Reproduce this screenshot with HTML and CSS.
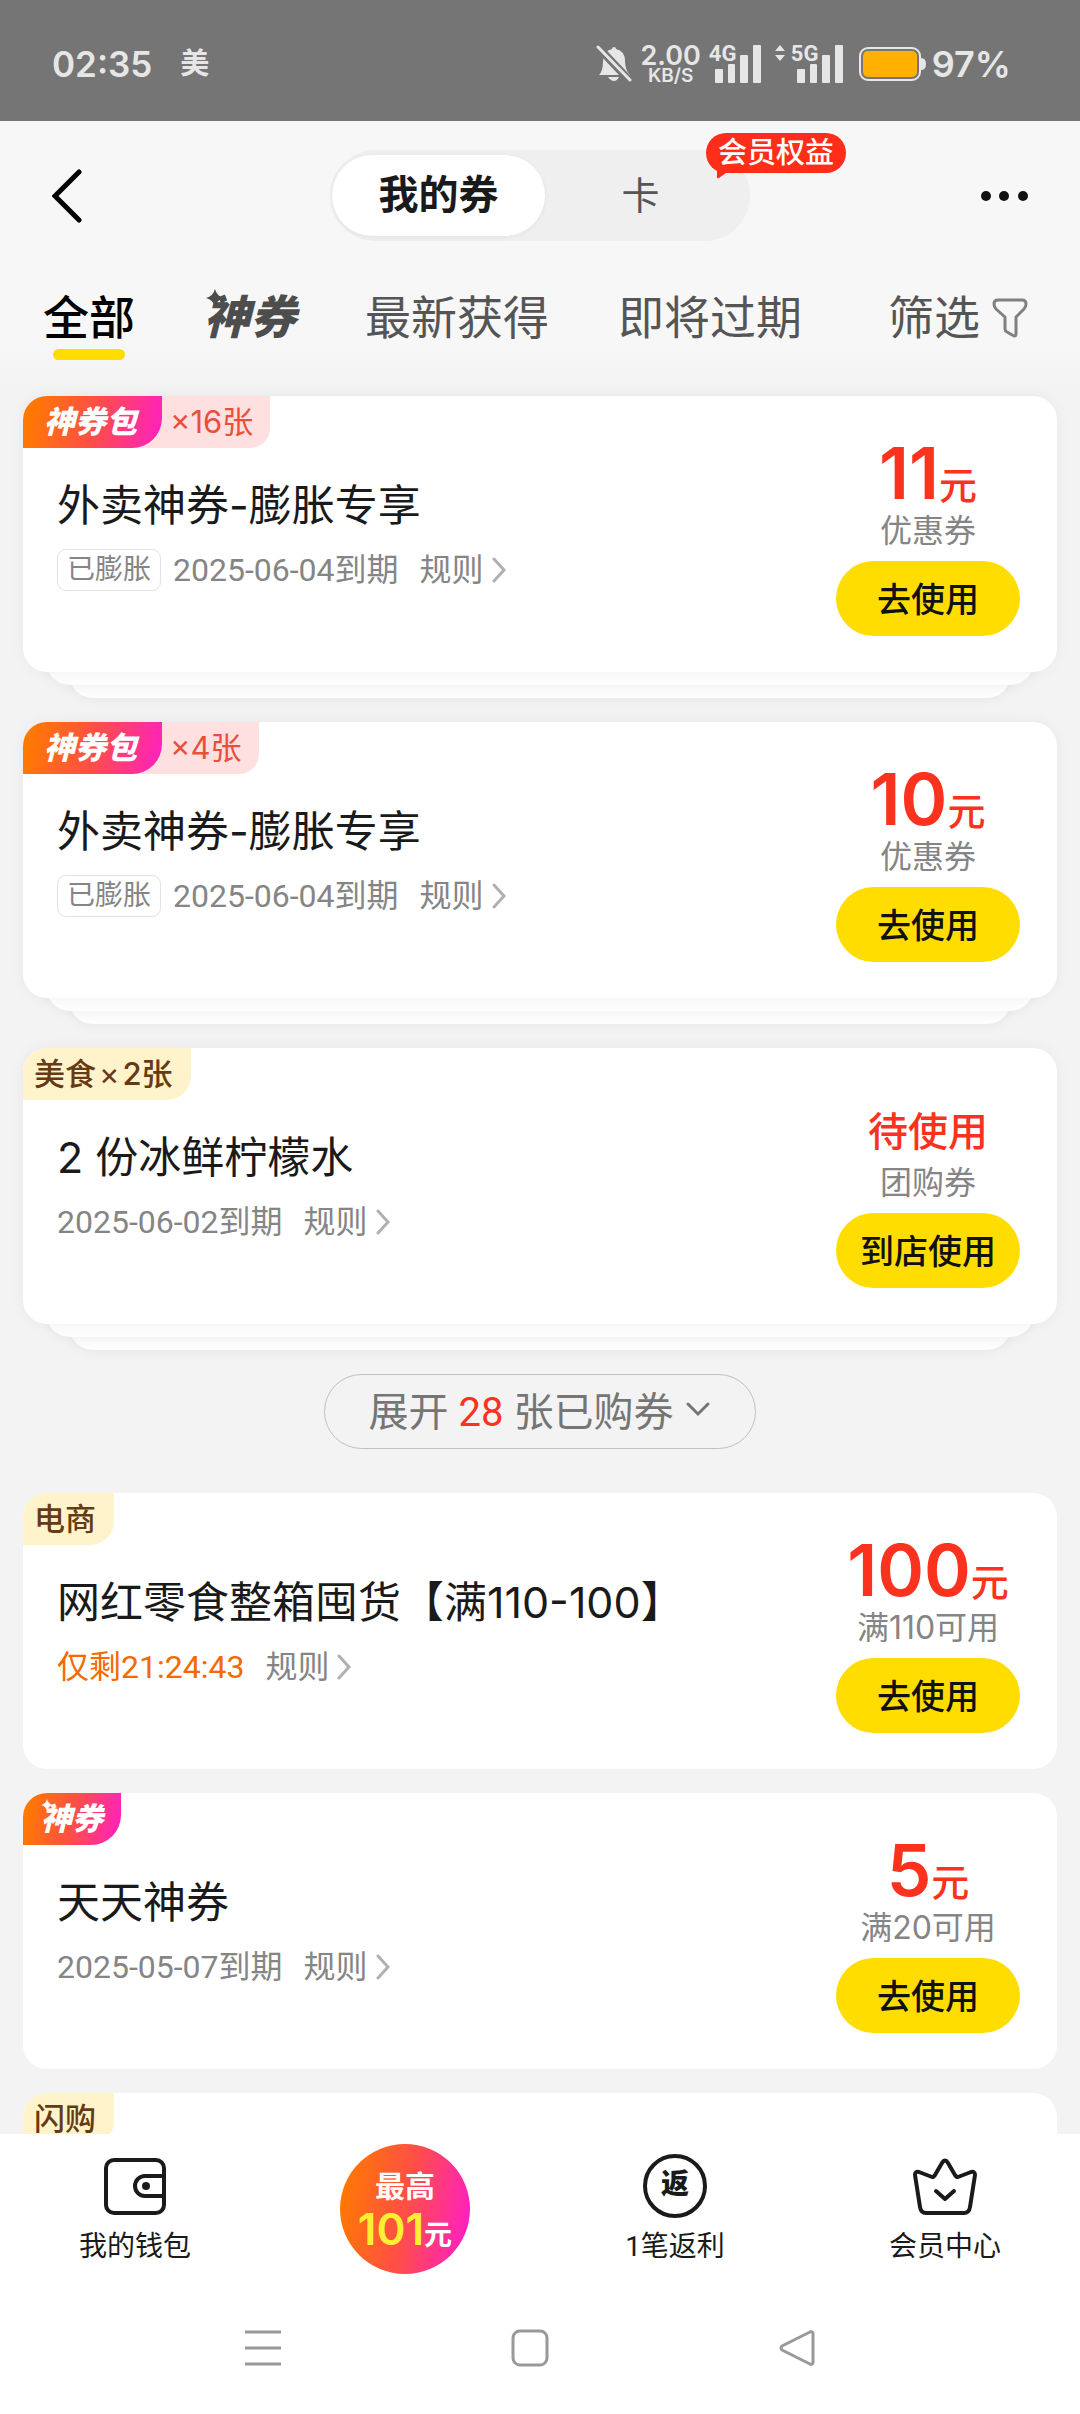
FILE: index.html
```html
<!DOCTYPE html>
<html lang="zh-CN">
<head>
<meta charset="utf-8">
<meta name="viewport" content="width=device-width">
<title>我的券</title>
<link rel="stylesheet" href="styles.css">
</head>
<body>
<svg class="defs" aria-hidden="true">
  <symbol id="chev" viewBox="0 0 14 26"><path d="M2 2l10 11L2 24" fill="none" stroke="#b0b0b0" stroke-width="3" stroke-linecap="round"/></symbol>
  <symbol id="star" viewBox="0 0 20 20"><path d="M10 0q2 8 10 10q-8 2-10 10q-2-8-10-10q8-2 10-10z" fill="currentColor"/></symbol>
</svg>

<div class="status">
  <span class="clock">02:35</span><span class="notice">美</span>
  <div class="status-right">
    <svg class="bell" width="36" height="38" viewBox="0 0 36 38">
      <path d="M18 2q2 0 2 2q9 2 9 12q0 9 5 14H3q4-4 4-14q0-10 9-12q0-2 2-2zM12 32h11q-2 4-5 4t-6-4z" fill="#e6e6e6"/>
      <path d="M0 0l36 38" stroke="#757575" stroke-width="8"/>
      <path d="M2 2l32 33" stroke="#e6e6e6" stroke-width="3" stroke-linecap="round"/>
    </svg>
    <div class="speed"><b>2.00</b><small>KB/S</small></div>
    <div class="signal"><span>4G</span>
      <svg width="46" height="38" viewBox="0 0 46 38" fill="#e6e6e6"><rect y="24" width="8" height="14" rx="1"/><rect x="13" y="19" width="7" height="19" rx="1"/><rect x="25" y="10" width="8" height="28" rx="1"/><rect x="38" width="8" height="38" rx="1"/></svg>
    </div>
    <div class="signal five">
      <svg class="arrows" width="10" height="16" viewBox="0 0 10 16" fill="#e6e6e6"><path d="M5 0l5 6H0zM5 16l5-6H0z"/></svg><span>5G</span>
      <svg width="46" height="38" viewBox="0 0 46 38" fill="#e6e6e6"><rect y="24" width="8" height="14" rx="1"/><rect x="13" y="19" width="7" height="19" rx="1"/><rect x="25" y="10" width="8" height="28" rx="1"/><rect x="38" width="8" height="38" rx="1"/></svg>
    </div>
    <svg class="battery" width="67" height="36" viewBox="0 0 67 36">
      <rect x="1" y="2" width="60" height="32" rx="8" fill="none" stroke="#e6e6e6" stroke-width="2"/>
      <rect x="4" y="5" width="54" height="26" rx="5" fill="#ffb000"/>
      <path d="M62 12q5 0 5 6t-5 6z" fill="#e6e6e6"/>
    </svg>
    <span class="percent">97%</span>
  </div>
</div>

<header class="header">
  <button class="icon-btn" aria-label="返回"><svg width="30" height="54" viewBox="0 0 30 54"><path d="M27 3L3 27l24 24" fill="none" stroke="#000" stroke-width="5" stroke-linecap="round"/></svg></button>
  <div class="switch">
    <button class="on">我的券</button><button>卡</button>
    <span class="bubble">会员权益<svg width="14" height="9" viewBox="0 0 14 9"><path d="M1 0v7q0 2 2 1L14 0z" fill="#ff2d19"/></svg></span>
  </div>
  <button class="icon-btn" aria-label="更多"><svg width="48" height="12" viewBox="0 0 48 12" fill="#111"><circle cx="6" cy="6" r="5"/><circle cx="24" cy="6" r="5"/><circle cx="43" cy="6" r="5"/></svg></button>
</header>

<nav class="tabs">
  <button class="active">全部</button>
  <button class="brand"><svg class="star"><use href="#star"/></svg>神券</button>
  <button>最新获得</button>
  <button>即将过期</button>
  <button class="filter">筛选<svg width="36" height="40" viewBox="0 0 36 40"><path d="M6 2h24q4 0 4 4q0 3-2 5l-8 8v17q0 2-2 2l-7-4q-2-1-2-3V19L4 11Q2 9 2 6q0-4 4-4z" fill="none" stroke="#808080" stroke-width="3" stroke-linejoin="round"/></svg></button>
</nav>

<main class="list">
  <div class="stack"><article class="card">
    <div class="left">
      <div class="tags"><span class="tag hot">神券包</span><span class="tag count">×16张</span></div>
      <h2>外卖神券-膨胀专享</h2>
      <p class="meta"><span class="chip">已膨胀</span><span>2025-06-04到期</span><button class="rule">规则<svg><use href="#chev"/></svg></button></p>
    </div>
    <div class="right"><p class="price">11<small>元</small></p><p class="kind">优惠券</p><button class="use">去使用</button></div>
  </article></div>

  <div class="stack"><article class="card">
    <div class="left">
      <div class="tags"><span class="tag hot">神券包</span><span class="tag count">×4张</span></div>
      <h2>外卖神券-膨胀专享</h2>
      <p class="meta"><span class="chip">已膨胀</span><span>2025-06-04到期</span><button class="rule">规则<svg><use href="#chev"/></svg></button></p>
    </div>
    <div class="right"><p class="price">10<small>元</small></p><p class="kind">优惠券</p><button class="use">去使用</button></div>
  </article></div>

  <div class="stack"><article class="card">
    <div class="left">
      <div class="tags"><span class="tag plain">美食<i>×</i>2张</span></div>
      <h2>2 份冰鲜柠檬水</h2>
      <p class="meta"><span>2025-06-02到期</span><button class="rule">规则<svg><use href="#chev"/></svg></button></p>
    </div>
    <div class="right"><p class="state">待使用</p><p class="kind">团购券</p><button class="use">到店使用</button></div>
  </article></div>

  <button class="expand"><span>展开 <em>28</em> 张已购券</span><svg width="26" height="16" viewBox="0 0 26 16"><path d="M3 3l10 10L23 3" fill="none" stroke="#757575" stroke-width="3" stroke-linecap="round"/></svg></button>

  <article class="card">
    <div class="left">
      <div class="tags"><span class="tag plain">电商</span></div>
      <h2>网红零食整箱囤货【满110-100】</h2>
      <p class="meta"><span class="left-time">仅剩21:24:43</span><button class="rule">规则<svg><use href="#chev"/></svg></button></p>
    </div>
    <div class="right"><p class="price">100<small>元</small></p><p class="kind">满110可用</p><button class="use">去使用</button></div>
  </article>

  <article class="card">
    <div class="left">
      <div class="tags"><span class="tag hot short"><svg class="star"><use href="#star"/></svg>神券</span></div>
      <h2>天天神券</h2>
      <p class="meta"><span>2025-05-07到期</span><button class="rule">规则<svg><use href="#chev"/></svg></button></p>
    </div>
    <div class="right"><p class="price">5<small>元</small></p><p class="kind">满20可用</p><button class="use">去使用</button></div>
  </article>

  <article class="card">
    <div class="left"><div class="tags"><span class="tag plain">闪购</span></div></div>
  </article>
</main>

<nav class="bottom">
  <a href="#wallet"><svg width="64" height="64" viewBox="0 0 64 64" fill="none" stroke="#1a1a1a" stroke-width="4"><rect x="3" y="6" width="58" height="53" rx="8"/><path d="M61 22H42a10 10 0 0 0 0 20h19"/><circle cx="43" cy="32" r="4" fill="#1a1a1a" stroke="none"/></svg><span>我的钱包</span></a>
  <a href="#top-coupon" class="promo"><span class="ball"><b>最高</b><strong>101<small>元</small></strong></span></a>
  <a href="#rebate"><span class="coin">返</span><span>1笔返利</span></a>
  <a href="#member"><svg width="64" height="64" viewBox="0 0 64 64" fill="none" stroke="#1a1a1a" stroke-width="4" stroke-linejoin="round" stroke-linecap="round"><path d="M6 18l13 5q2 0 3-2l7-12q3-5 6 0l7 12q1 2 3 2l13-5q4-1 4 3l-5 32q-1 6-6 6H13q-5 0-6-6L2 21q0-4 4-3z"/><path d="M23 37l9 8 9-8"/></svg><span>会员中心</span></a>
</nav>

<div class="system">
  <button aria-label="菜单"><svg width="38" height="38" viewBox="0 0 38 38" stroke="#999" stroke-width="3"><path d="M1 3h36M1 19h36M1 35h36"/></svg></button>
  <button aria-label="主页"><svg width="38" height="38" viewBox="0 0 38 38"><rect x="2" y="2" width="34" height="34" rx="7" fill="none" stroke="#999" stroke-width="3"/></svg></button>
  <button aria-label="后退"><svg width="38" height="38" viewBox="0 0 38 38"><path d="M32 3L4 17q-2 2 0 4l28 14q3 1 3-2V5q0-3-3-2z" fill="none" stroke="#999" stroke-width="3" stroke-linejoin="round"/></svg></button>
</div>
</body>
</html>
```
FILE: styles.css
```css
* { box-sizing: border-box; margin: 0; padding: 0; }
html { height: 100%; }
body {
  height: 100%;
  display: flex;
  flex-direction: column;
  background: #f3f3f3;
  color: #1a1a1a;
  font-family: Roboto, "Noto Sans CJK SC", sans-serif;
  overflow: hidden;
}
button { border: 0; background: none; font: inherit; color: inherit; cursor: pointer; }
a { color: inherit; text-decoration: none; }
svg { display: block; flex: none; }
.defs { position: absolute; width: 0; height: 0; }

/* status bar */
.status {
  flex: none;
  display: flex;
  align-items: center;
  height: 121px;
  padding: 7px 69px 0 52px;
  background: #757575;
  color: #e6e6e6;
}
.clock, .percent { font: 600 36px/44px Inter, sans-serif; }
.clock { font-size: 35px; }
.notice { margin-left: 28px; font-size: 29px; font-weight: 700; line-height: 44px; }
.status-right { display: flex; align-items: center; margin-left: auto; }
.speed { margin: 0 8px; display: flex; flex-direction: column; align-items: center; font-family: Inter, sans-serif; }
.speed b { font-size: 27px; line-height: 24px; font-weight: 600; }
.speed small { font-size: 19px; line-height: 16px; font-weight: 600; }
.signal { position: relative; padding-left: 6px; margin-right: 14px; }
.signal span { position: absolute; left: 0; top: -2px; font-size: 22px; line-height: 22px; font-weight: 700; }
.signal.five { padding-left: 22px; margin-right: 16px; }
.signal.five span { left: 16px; }
.signal .arrows { position: absolute; left: 0; top: 0; }
.percent { margin-left: 6px; }

/* header */
.header {
  flex: none;
  display: flex;
  align-items: center;
  justify-content: space-between;
  padding: 29px 52px 12px;
  background: #f7f7f7;
}
.icon-btn { display: flex; width: 48px; }
.switch {
  position: relative;
  display: grid;
  grid-template-columns: 213px 1fr;
  width: 420px;
  height: 91px;
  padding: 5px 14px 5px 2px;
  border-radius: 46px;
  background: #efefef;
}
.switch button { border-radius: 41px; font-size: 38px; line-height: 56px; color: #555; }
.switch .on { background: #fff; color: #1a1a1a; font-size: 40px; font-weight: 700; box-shadow: 0 1px 5px rgba(0, 0, 0, .06); }
.bubble {
  position: absolute;
  left: 376px;
  top: -17px;
  padding: 0 12px;
  border-radius: 20px;
  background: #ff2d19;
  color: #fff;
  font-size: 29px;
  line-height: 40px;
  font-weight: 500;
  white-space: nowrap;
}
.bubble svg { position: absolute; left: 10px; top: 37px; }

/* category tabs */
.tabs {
  flex: none;
  display: flex;
  align-items: flex-start;
  gap: 69px;
  padding: 33px 52px 18px 43px;
  background: linear-gradient(#f7f7f7 70%, #f3f3f3);
}
.tabs button { position: relative; height: 76px; font-size: 46px; line-height: 64px; color: #555; display: flex; white-space: nowrap; }
.tabs .active { color: #000; font-weight: 500; }
.tabs .active::after {
  content: "";
  position: absolute;
  left: 50%;
  bottom: 2px;
  width: 72px;
  height: 11px;
  margin-left: -36px;
  border-radius: 6px;
  background: #ffdd00;
}
.tabs .brand { color: #4d4d4d; font-weight: 900; font-style: italic; }
.brand .star { position: absolute; left: 2px; top: 3px; width: 18px; height: 18px; }
.tabs .filter { gap: 12px; margin-left: auto; }
.filter svg { margin-top: 12px; }

/* coupon list */
.list {
  flex: 1;
  min-height: 0;
  display: flex;
  flex-direction: column;
  gap: 24px;
  padding: 16px 23px 0;
  overflow: hidden;
}
.list > * { flex: none; }
.stack { position: relative; z-index: 0; padding-bottom: 26px; }
.stack::before, .stack::after {
  content: "";
  position: absolute;
  z-index: -1;
  height: 60px;
  border-radius: 24px;
  background: #fdfdfd;
  box-shadow: 0 2px 12px rgba(0, 0, 0, .05);
}
.stack::before { left: 46px; right: 46px; bottom: 0; z-index: -2; }
.stack::after { left: 23px; right: 23px; bottom: 13px; }
.stack .card { box-shadow: 0 0 14px rgba(0, 0, 0, .05); }
.card {
  display: flex;
  justify-content: space-between;
  min-height: 276px;
  border-radius: 24px;
  background: #fff;
  overflow: hidden;
}
.tags { display: flex; height: 52px; }
.tag { font-family: Inter, "Noto Sans CJK SC", sans-serif; font-size: 31px; line-height: 52px; white-space: nowrap; }
.hot {
  position: relative;
  z-index: 1;
  width: 139px;
  padding-right: 4px;
  border-radius: 0 0 30px 0;
  background: linear-gradient(100deg, #ff7a00 5%, #ff4f45 50%, #ff1fc4);
  color: #fff;
  text-align: center;
  font-style: italic;
  font-weight: 900;
}
.hot.short { width: 98px; padding-right: 0; }
.hot .star { position: absolute; left: 18px; top: 6px; width: 12px; height: 12px; }
.count { margin-left: -30px; padding: 0 17px 0 38px; border-radius: 0 0 20px 0; background: #ffe0e0; color: #e8503c; }
.plain { padding: 0 18px 0 11px; border-radius: 0 0 24px 0; background: #fff3cc; color: #663b14; font-weight: 500; }
.plain i { font-style: normal; font-weight: 400; margin: 0 3px; }
.card h2 { margin: 27px 0 13px 34px; font: 400 43px/60px Inter, "Noto Sans CJK SC", sans-serif; white-space: nowrap; }
.meta { display: flex; align-items: center; margin-left: 34px; font-size: 32px; line-height: 44px; color: #858585; white-space: nowrap; }
.chip { margin-right: 12px; padding: 0 9px; border: 1px solid #e2e2e2; border-radius: 9px; font-size: 28px; line-height: 40px; }
.left-time { color: #f26a00; }
.rule { display: flex; align-items: center; gap: 8px; margin-left: 21px; }
.rule svg { width: 14px; height: 26px; }
.right {
  display: flex;
  flex-direction: column;
  align-items: center;
  justify-content: flex-end;
  width: 184px;
  margin: 0 37px 36px 0;
  white-space: nowrap;
}
.price { display: flex; align-items: baseline; font: 600 71px/72px Inter, "Noto Sans CJK SC", sans-serif; color: #fa321e; }
.price small { font-size: 38px; line-height: 40px; font-weight: 500; }
.state { font-size: 40px; line-height: 56px; font-weight: 500; color: #fa321e; }
.kind { font: 32px/44px Inter, "Noto Sans CJK SC", sans-serif; color: #858585; }
.use { width: 184px; height: 75px; margin-top: 8px; padding-bottom: 3px; border-radius: 38px; background: #ffdd00; color: #111; font-size: 34px; font-weight: 500; }

.expand {
  align-self: center;
  display: flex;
  align-items: center;
  justify-content: center;
  gap: 12px;
  width: 432px;
  height: 75px;
  padding-bottom: 5px;
  margin-bottom: 20px;
  border: 1px solid #c0c0c0;
  border-radius: 38px;
  color: #757575;
  font-size: 40px;
}
.expand em { font-style: normal; color: #fa321e; }

/* bottom navigation */
.bottom {
  flex: none;
  display: grid;
  grid-template-columns: repeat(4, 1fr);
  height: 150px;
  background: #fff;
}
.bottom a { display: flex; flex-direction: column; align-items: center; gap: 9px; padding-top: 20px; font-size: 28px; line-height: 40px; }
.bottom .promo { padding-top: 10px; }
.ball {
  display: flex;
  flex-direction: column;
  align-items: center;
  width: 130px;
  height: 130px;
  padding-top: 23px;
  border-radius: 50%;
  background: linear-gradient(100deg, #ff7a00 5%, #ff4f45 50%, #ff1fc4 95%);
  color: #fff;
}
.ball b { font-size: 30px; line-height: 40px; }
.ball strong { display: flex; align-items: baseline; font: 600 44px/44px Inter, sans-serif; color: #ffee33; }
.ball small { font: 700 28px/32px "Noto Sans CJK SC", sans-serif; color: #fff; }
.coin { width: 64px; height: 64px; border: 4px solid #1a1a1a; border-radius: 50%; text-align: center; font-size: 28px; line-height: 54px; font-weight: 900; }

.system {
  flex: none;
  display: grid;
  grid-template-columns: repeat(3, 1fr);
  justify-items: center;
  align-items: center;
  height: 130px;
  padding: 0 150px 2px 129px;
  background: #fff;
}
```
